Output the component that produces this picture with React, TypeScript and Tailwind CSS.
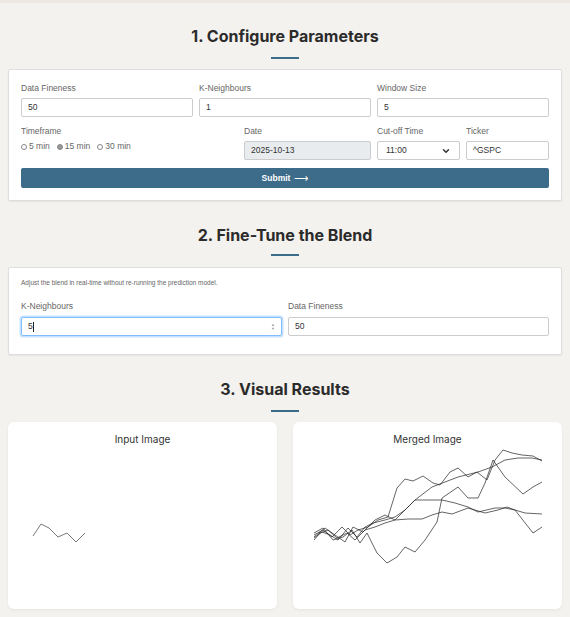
import { ChevronDown } from 'lucide-react';

const inputLines = [[25, 90], [33, 78], [41, 82], [50, 91], [59, 87], [68, 96], [77, 87]];

const mergedLines = [
    [[21, 89], [30, 84], [39, 91], [49, 81], [57, 89], [65, 84], [75, 81], [85, 74], [95, 71], [104, 42], [112, 33], [120, 35], [130, 30], [140, 37], [147, 39], [157, 26], [165, 22], [175, 31], [184, 26], [194, 34], [202, 14], [210, 4], [219, 7], [229, 9], [240, 10], [249, 15]],
    [[21, 92], [29, 86], [37, 89], [45, 94], [55, 82], [64, 91], [72, 81], [80, 77], [92, 74], [102, 71], [112, 64], [122, 54], [139, 41], [152, 36], [165, 31], [185, 26], [199, 21], [212, 14], [225, 12], [239, 12], [249, 14]],
    [[21, 87], [30, 82], [40, 94], [50, 91], [59, 84], [67, 97], [74, 87], [84, 107], [94, 117], [104, 111], [112, 101], [122, 106], [132, 94], [144, 76], [149, 52], [165, 41], [175, 52], [185, 52], [192, 37], [200, 14], [212, 31], [230, 48], [240, 41], [249, 36]],
    [[21, 91], [32, 82], [42, 89], [52, 96], [60, 81], [70, 86], [82, 74], [92, 69], [102, 74], [114, 62], [122, 54], [139, 54], [149, 54], [162, 57], [175, 61], [185, 66], [202, 62], [212, 62], [222, 64], [232, 67], [249, 68]],
    [[21, 94], [27, 87], [35, 84], [44, 92], [54, 87], [62, 94], [72, 84], [82, 81], [92, 77], [102, 74], [115, 73], [129, 73], [139, 69], [149, 66], [159, 68], [175, 62], [192, 67], [205, 64], [214, 61], [222, 64], [240, 87], [249, 81]],
];

const toPoints = (pts: number[][]) => pts.map((p) => p.join(',')).join(' ');

const SectionTitle = ({ children, barClass }: { children: string; barClass: string }) => (
    <div className="flex flex-col items-center">
        <h2 className="font-['Inter',sans-serif] text-[16px] leading-[20px] font-bold text-[#2b2b2b]">{children}</h2>
        <div className={`h-[2px] w-[28px] bg-[#3d6b8a] ${barClass}`} />
    </div>
);

const Field = ({ label, value, className = '' }: { label: string; value: string; className?: string }) => (
    <div className="flex flex-col">
        <label className="text-[8.5px] leading-[10px] text-[#666] mb-[5px]">{label}</label>
        <div className={`h-[19px] border border-[#ccc] rounded-[2px] px-[6px] flex items-center text-[8.5px] text-[#333] ${className}`}>{value}</div>
    </div>
);

const Radio = ({ label, checked = false }: { label: string; checked?: boolean }) => (
    <span className="flex items-center gap-[2px]">
        <span className={`w-[6px] h-[6px] rounded-full border border-[#888] ${checked ? 'bg-[#999]' : 'bg-white'}`} />
        <span>{label}</span>
    </span>
);

const App = () => {
    return (
        <div className="min-h-[617px] bg-[#f4f2ee] font-['Liberation_Sans',Arial,sans-serif]">
            <div className="h-[3px] bg-[#efe7e1]" />

            <div className="px-[8px] pt-[23px]">
                <SectionTitle barClass="mt-[11px]">1. Configure Parameters</SectionTitle>
                <div className="mt-[10px] bg-white border border-[#dedede] rounded-[2px] shadow-[0_1px_2px_rgba(0,0,0,0.06)] px-[12px] pt-[13px] pb-[12px]">
                    <div className="grid grid-cols-3 gap-[6px]">
                        <Field label="Data Fineness" value="50" />
                        <Field label="K-Neighbours" value="1" />
                        <Field label="Window Size" value="5" />
                    </div>
                    <div className="grid grid-cols-[1fr_127px_83px_83px] gap-[6px] mt-[9px]">
                        <div className="flex flex-col">
                            <span className="text-[8.5px] leading-[10px] text-[#666] mb-[5px]">Timeframe</span>
                            <div className="flex items-center gap-[7px] text-[8.5px] text-[#666] h-[11px]">
                                <Radio label="5 min" />
                                <Radio label="15 min" checked />
                                <Radio label="30 min" />
                            </div>
                        </div>
                        <Field label="Date" value="2025-10-13" className="bg-[#e9ecef]" />
                        <div className="flex flex-col">
                            <label className="text-[8.5px] leading-[10px] text-[#666] mb-[5px]">Cut-off Time</label>
                            <div className="h-[19px] border border-[#ccc] rounded-[2px] px-[8px] flex items-center justify-between text-[8.5px] text-[#333]">
                                <span>11:00</span>
                                <ChevronDown size={10} strokeWidth={3.5} className="text-[#333]" />
                            </div>
                        </div>
                        <Field label="Ticker" value="^GSPC" />
                    </div>
                    <button className="mt-[8px] w-full h-[20px] bg-[#3d6b8a] rounded-[2px] text-white text-[8.5px] font-bold flex items-center justify-center gap-[4px]">
                        Submit <span className="font-normal text-[10px]">⟶</span>
                    </button>
                </div>
            </div>

            <div className="px-[8px] pt-[24px]">
                <SectionTitle barClass="mt-[9px]">2. Fine-Tune the Blend</SectionTitle>
                <div className="mt-[11px] bg-white border border-[#dedede] rounded-[2px] shadow-[0_1px_2px_rgba(0,0,0,0.06)] px-[12px] pt-[11px] pb-[18px]">
                    <p className="text-[6.5px] leading-[8px] text-[#666]">Adjust the blend in real-time without re-running the prediction model.</p>
                    <div className="grid grid-cols-2 gap-[6px] mt-[14px]">
                        <div className="flex flex-col">
                            <label className="text-[8.5px] leading-[10px] text-[#666] mb-[6px]">K-Neighbours</label>
                            <div className="h-[19px] border border-[#80bdff] rounded-[2px] shadow-[0_0_0_1.5px_rgba(128,189,255,0.45)] px-[6px] flex items-center justify-between text-[8.5px] text-[#333]">
                                <span className="flex items-center">5<span className="w-px h-[10px] bg-[#222]" /></span>
                                <span className="flex flex-col text-[#999] text-[4px] leading-[4px]">
                                    <span>▲</span>
                                    <span>▼</span>
                                </span>
                            </div>
                        </div>
                        <div className="flex flex-col">
                            <label className="text-[8.5px] leading-[10px] text-[#666] mb-[6px]">Data Fineness</label>
                            <div className="h-[19px] border border-[#ccc] rounded-[2px] px-[6px] flex items-center text-[8.5px] text-[#333]">50</div>
                        </div>
                    </div>
                </div>
            </div>

            <div className="px-[8px] pt-[24px] pb-[8px]">
                <SectionTitle barClass="mt-[11px]">3. Visual Results</SectionTitle>
                <div className="mt-[10px] grid grid-cols-2 gap-[16px]">
                    <div className="bg-white rounded-[6px] shadow-[0_1px_3px_rgba(0,0,0,0.06)] h-[187px] flex flex-col">
                        <h3 className="font-['Inter',sans-serif] text-[10px] leading-[14px] text-[#333] text-center pt-[10px] h-[24px]">Input Image</h3>
                        <svg width="269" height="163" viewBox="0 0 269 163" className="block">
                            <polyline points={toPoints(inputLines)} fill="none" stroke="#555" strokeWidth="0.8" />
                        </svg>
                    </div>
                    <div className="bg-white rounded-[6px] shadow-[0_1px_3px_rgba(0,0,0,0.06)] h-[187px] flex flex-col">
                        <h3 className="font-['Inter',sans-serif] text-[10px] leading-[14px] text-[#333] text-center pt-[10px] h-[24px]">Merged Image</h3>
                        <svg width="269" height="163" viewBox="0 0 269 163" className="block">
                            {mergedLines.map((l, i) => (
                                <polyline key={i} points={toPoints(l)} fill="none" stroke="#222" strokeWidth="0.7" />
                            ))}
                        </svg>
                    </div>
                </div>
            </div>
        </div>
    );
};

export default App;
